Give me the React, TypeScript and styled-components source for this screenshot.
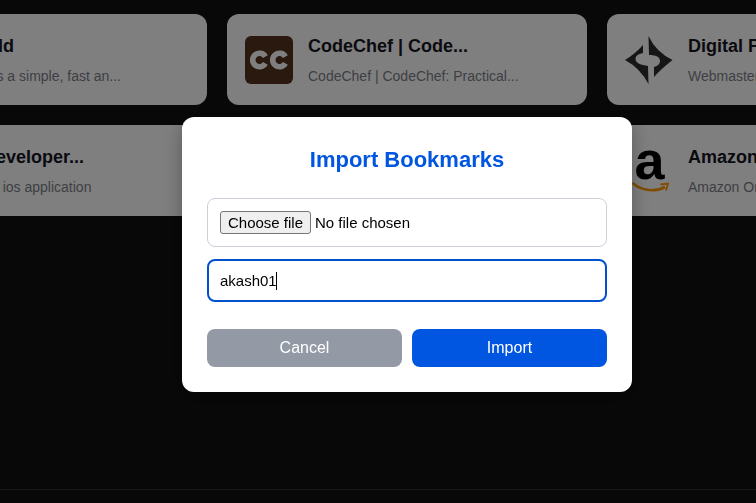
import React from 'react'
import styled, { createGlobalStyle } from 'styled-components'

const GlobalStyle = createGlobalStyle`
  html, body {
    margin: 0;
    height: 100%;
    background: #111;
    font-family: 'Liberation Sans', Arial, sans-serif;
    overflow: hidden;
  }
`

const Page = styled.div`
  height: 100vh;
  display: flex;
  flex-direction: column;
  overflow: hidden;
  background: #111;
`

const CardGrid = styled.main`
  flex: 1;
  display: grid;
  grid-template-columns: repeat(3, 360px);
  grid-auto-rows: 91px;
  align-content: start;
  gap: 20px;
  padding-top: 14px;
  margin-left: -153px;
`

const Card = styled.article`
  display: flex;
  align-items: center;
  gap: 15px;
  padding: 0 18px;
  background: #fff;
  border-radius: 12px;
`

const LogoBox = styled.div`
  position: relative;
  flex: none;
  width: 48px;
  height: 48px;
  display: flex;
  align-items: center;
  justify-content: center;
`

const AmazonLetter = styled.span`
  font-size: 54px;
  font-weight: 700;
  line-height: 48px;
  color: #000;
  margin: -22px 0 0 1px;
`

const AmazonSmile = styled.svg`
  position: absolute;
  left: 7px;
  bottom: 1px;
`

const CardText = styled.div`
  min-width: 0;
  display: flex;
  flex-direction: column;
  gap: 11px;
`

const CardTitle = styled.h3`
  margin: 0;
  font-size: 18px;
  line-height: 22px;
  font-weight: 700;
  color: #14151f;
  white-space: nowrap;
`

const CardDesc = styled.p`
  margin: 0;
  font-size: 14px;
  line-height: 17px;
  color: #7c7f88;
  white-space: nowrap;
`

const Footer = styled.footer`
  height: 13px;
  border-top: 1px solid #333;
`

const Overlay = styled.div`
  position: fixed;
  inset: 0;
  display: flex;
  align-items: flex-start;
  justify-content: center;
  padding: 117px 0 0 58px;
  box-sizing: border-box;
  background: rgba(0, 0, 0, 0.5);
`

const Modal = styled.form`
  width: 450px;
  box-sizing: border-box;
  padding: 25px;
  background: #fff;
  border-radius: 12px;
  box-shadow: 0 4px 20px rgba(0, 0, 0, 0.3);
`

const ModalTitle = styled.h2`
  margin: 0 0 20px;
  font-size: 22px;
  line-height: 36px;
  font-weight: 700;
  text-align: center;
  color: #0056e0;
`

const FileField = styled.label`
  display: flex;
  align-items: center;
  gap: 4px;
  height: 49px;
  box-sizing: border-box;
  padding: 0 12px;
  margin-bottom: 12px;
  border: 1px solid #ccd1d9;
  border-radius: 8px;
  background: #fff;
  font-size: 15px;
  color: #000;
`

const HiddenFileInput = styled.input`
  display: none;
`

const FileButton = styled.span`
  width: 91px;
  height: 23px;
  box-sizing: border-box;
  display: flex;
  align-items: center;
  justify-content: center;
  background: #efefef;
  border: 1px solid #767676;
  border-radius: 3px;
`

const NameField = styled.div`
  position: relative;
`

const NameInput = styled.input`
  display: block;
  width: 100%;
  height: 43px;
  box-sizing: border-box;
  padding: 0 11px;
  border: 2px solid #0052cc;
  border-radius: 8px;
  outline: none;
  background: #fff;
  font: 15px 'Liberation Sans', Arial, sans-serif;
  color: #000;
  caret-color: transparent;
`

const Caret = styled.span`
  position: absolute;
  left: 69px;
  top: 13px;
  width: 1px;
  height: 18px;
  background: #000;
`

const Actions = styled.div`
  display: flex;
  gap: 10px;
  margin-top: 27px;
`

const ActionButton = styled.button<{ $primary?: boolean }>`
  flex: 1;
  height: 38px;
  border: none;
  border-radius: 8px;
  font: 16px 'Liberation Sans', Arial, sans-serif;
  color: #fff;
  background: ${({ $primary }) => ($primary ? '#0056e0' : '#939aa6')};
`

const CodeChefLogo = () => (
  <svg width="48" height="48" viewBox="0 0 48 48">
    <rect width="48" height="48" rx="6" fill="#55321f" />
    <g fill="none" stroke="#fff" strokeWidth="5.6">
      <path d="M20.4 20.6A6.8 6.8 0 1 0 20.4 27.4" />
      <path d="M40.4 20.6A6.8 6.8 0 1 0 40.4 27.4" />
    </g>
  </svg>
)

const DigitalLogo = () => (
  <svg width="48" height="48" viewBox="0 0 48 48" fill="#2c2c2c">
    <path d="M23.5 0Q31 16 47.5 24Q36 33 29 41V31C33 30 35 28 35 25C35 21 31 19 24 19Z" />
    <path d="M23.5 48Q15 32 0 24Q10 18 18 9V17C13 18 10.5 20 10.5 23C10.5 27 16 29 23 30Z" />
  </svg>
)

const AmazonLogo = () => (
  <>
    <AmazonLetter>a</AmazonLetter>
    <AmazonSmile width="37" height="12" viewBox="0 0 37 12">
      <path d="M0.5 1C10 9.5 24 10 33 5" fill="none" stroke="#ff9900" strokeWidth="2.6" />
      <path d="M28.5 2.5L36 1.5L34 8.5" fill="none" stroke="#ff9900" strokeWidth="1.8" />
    </AmazonSmile>
  </>
)

interface Bookmark {
  title: string
  desc: string
  logo?: React.ReactNode
}

const bookmarks: Bookmark[] = [
  { title: 'Dart Build', desc: 'Dart Build is a simple, fast an...' },
  { title: 'CodeChef | Code...', desc: 'CodeChef | CodeChef: Practical...', logo: <CodeChefLogo /> },
  { title: 'Digital Point', desc: 'Webmaster Forum and...', logo: <DigitalLogo /> },
  { title: 'Apple Developer...', desc: 'Build better ios application' },
  { title: 'GitHub', desc: 'Where the world builds software' },
  { title: 'Amazon', desc: 'Amazon Online Shopping', logo: <AmazonLogo /> },
]

const App: React.FC = () => {
  return (
    <>
      <GlobalStyle />
      <Page>
        <CardGrid>
          {bookmarks.map((item) => (
            <Card key={item.title}>
              <LogoBox>{item.logo}</LogoBox>
              <CardText>
                <CardTitle>{item.title}</CardTitle>
                <CardDesc>{item.desc}</CardDesc>
              </CardText>
            </Card>
          ))}
        </CardGrid>
        <Footer />
      </Page>
      <Overlay>
        <Modal onSubmit={(e) => e.preventDefault()}>
          <ModalTitle>Import Bookmarks</ModalTitle>
          <FileField>
            <HiddenFileInput type="file" />
            <FileButton>Choose file</FileButton>
            <span>No file chosen</span>
          </FileField>
          <NameField>
            <NameInput type="text" defaultValue="akash01" />
            <Caret />
          </NameField>
          <Actions>
            <ActionButton type="button">Cancel</ActionButton>
            <ActionButton type="submit" $primary>
              Import
            </ActionButton>
          </Actions>
        </Modal>
      </Overlay>
    </>
  )
}

export default App
